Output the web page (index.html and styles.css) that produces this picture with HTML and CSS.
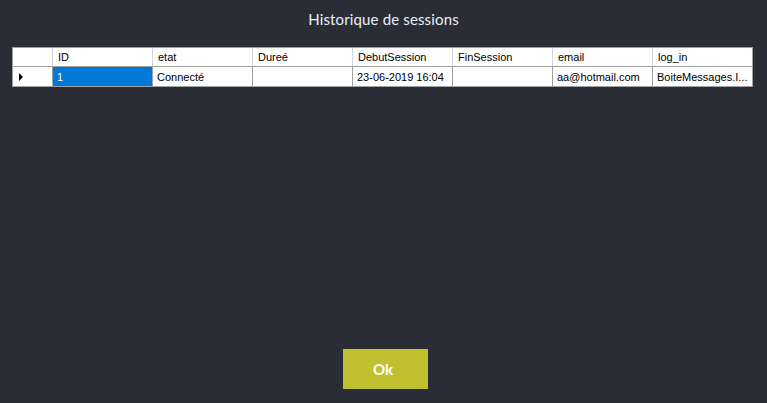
FILE: index.html
```html
<!DOCTYPE html>
<html>
<head>
<meta charset="utf-8">
<link rel="stylesheet" href="styles.css">
</head>
<body>
<div class="win">
  <h1 class="title">Historique de sessions</h1>
  <div class="grid">
    <div class="row head">
      <div class="rh"></div>
      <div class="c">ID</div>
      <div class="c">etat</div>
      <div class="c">Dureé</div>
      <div class="c">DebutSession</div>
      <div class="c">FinSession</div>
      <div class="c">email</div>
      <div class="c">log_in</div>
    </div>
    <div class="row data">
      <div class="rh"><span class="arrow"></span></div>
      <div class="c sel">1</div>
      <div class="c">Connecté</div>
      <div class="c"></div>
      <div class="c">23-06-2019 16:04</div>
      <div class="c"></div>
      <div class="c">aa@hotmail.com</div>
      <div class="c">BoiteMessages.I...</div>
    </div>
  </div>
  <div class="spacer"></div>
  <div class="actions"><button class="ok">Ok</button></div>
</div>
</body>
</html>
```
FILE: styles.css
```css
html, body { margin: 0; padding: 0; }
body { background: #2a2d35; width: 767px; height: 403px; overflow: hidden; }
.win { display: flex; flex-direction: column; height: 403px; }
.title {
  margin: 0; padding-top: 10px; height: 47px; box-sizing: border-box;
  text-align: center; font-family: "Lato", sans-serif; font-weight: 400;
  font-size: 15px; color: #e6f0fa; letter-spacing: 0.15px;
}
.grid {
  margin-left: 12px; width: 741px; box-sizing: border-box;
  border: 1px solid #a0a0a0; background: #ffffff;
  font-family: "Liberation Sans", Arial, sans-serif; font-size: 11px; color: #000;
}
.row { display: flex; }
.head { height: 18px; border-bottom: 1px solid #a0a0a0; }
.data { height: 19px; }
.rh { width: 40px; flex: none; border-right: 1px solid #a0a0a0; box-sizing: border-box; display: flex; align-items: center; }
.head .rh { border-right: 1px solid #d5d5d5; }
.c { width: 100px; flex: none; box-sizing: border-box; padding-left: 4px; display: flex; align-items: center; border-right: 1px solid #a0a0a0; white-space: nowrap; overflow: hidden; }
.head .c { border-right: 1px solid #d5d5d5; padding-left: 5px; }
.row .c:last-child { border-right: none; }
.sel { background: #0078d7; color: #fff; }
.arrow { margin-left: 6px; width: 0; height: 0; border-top: 4px solid transparent; border-bottom: 4px solid transparent; border-left: 4px solid #000; }
.spacer { flex: 1; }
.actions { display: flex; justify-content: center; padding-bottom: 14px; padding-left: 4px; }
.ok {
  width: 85px; height: 40px; border: none; background: #c0c02f; color: #fff;
  font-family: "Lato", sans-serif; font-weight: 700; font-size: 15px; padding: 0 5px 0 0;
}
```
